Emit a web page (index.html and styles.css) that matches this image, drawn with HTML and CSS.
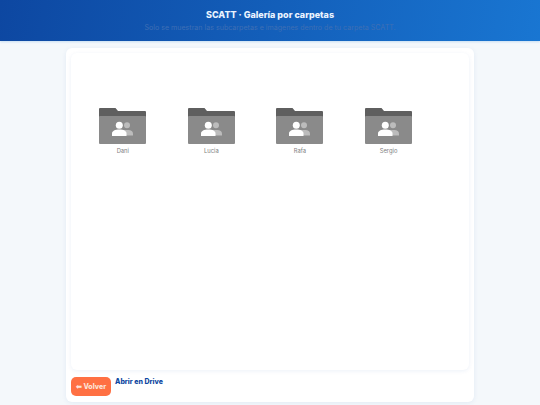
FILE: index.html
```html
<!DOCTYPE html>
<html lang="es">
<head>
<meta charset="utf-8">
<title>SCATT</title>
<link rel="stylesheet" href="styles.css">
</head>
<body>
<header class="top">
  <h1>SCATT · Galería por carpetas</h1>
  <p>Solo se muestran las subcarpetas e imágenes dentro de tu carpeta SCATT.</p>
</header>
<main class="card">
  <section class="panel">
    <div class="grid">
      <div class="tile">
        <svg class="folder" viewBox="0 0 47 36"><path class="tab" d="M0 1a1 1 0 0 1 1-1h15.500l2.500 3h27a1 1 0 0 1 1 1v8H0z"/><rect class="body" y="8" width="47" height="28" rx="1"/><use href="#people"/></svg>
        <span>Dani</span>
      </div>
      <div class="tile">
        <svg class="folder" viewBox="0 0 47 36"><path class="tab" d="M0 1a1 1 0 0 1 1-1h15.500l2.500 3h27a1 1 0 0 1 1 1v8H0z"/><rect class="body" y="8" width="47" height="28" rx="1"/><use href="#people"/></svg>
        <span>Lucia</span>
      </div>
      <div class="tile">
        <svg class="folder" viewBox="0 0 47 36"><path class="tab" d="M0 1a1 1 0 0 1 1-1h15.500l2.500 3h27a1 1 0 0 1 1 1v8H0z"/><rect class="body" y="8" width="47" height="28" rx="1"/><use href="#people"/></svg>
        <span>Rafa</span>
      </div>
      <div class="tile">
        <svg class="folder" viewBox="0 0 47 36"><path class="tab" d="M0 1a1 1 0 0 1 1-1h15.500l2.500 3h27a1 1 0 0 1 1 1v8H0z"/><rect class="body" y="8" width="47" height="28" rx="1"/><use href="#people"/></svg>
        <span>Sergio</span>
      </div>
    </div>
  </section>
  <footer class="actions">
    <a class="back">⬅ Volver</a>
    <a class="drive">Abrir en Drive</a>
  </footer>
</main>
<svg class="defs" width="0" height="0">
  <defs>
    <g id="people">
      <circle class="pb" cx="28" cy="17.300" r="3"/>
      <path class="pb" d="M24 22h5.500c2.500 0 4.500 1.300 4.500 3.500v2H24z"/>
      <circle class="pf" cx="20.300" cy="17.300" r="3.500"/>
      <path class="pf" d="M13 28v-2.500c0-2.500 3-4 7.300-4s7.200 1.500 7.200 4V28z"/>
    </g>
  </defs>
</svg>
</body>
</html>
```
FILE: styles.css
```css
* { box-sizing: border-box; }
html, body { height: 100%; }
body {
  margin: 0;
  background: #f4f8fb;
  font-family: "Inter", "Liberation Sans", sans-serif;
  display: flex;
  flex-direction: column;
  overflow: hidden;
}
.top {
  height: 41px;
  flex: none;
  background: linear-gradient(100deg, #0d47a1, #1976d2);
  text-align: center;
  padding-top: 8px;
  box-shadow: 0 1px 2px rgba(25, 118, 210, .2);
}
.top h1 {
  margin: 0;
  font-size: 9px;
  line-height: 13px;
  font-weight: 800;
  color: #eaf3ff;
}
.top p {
  margin: 2px 0 0;
  font-size: 7.100px;
  line-height: 10px;
  color: #3f6fb5;
}
.card {
  margin: 7px 66px 3px;
  flex: 1;
  min-height: 0;
  background: #fff;
  border-radius: 6px;
  box-shadow: 0 1px 5px rgba(13, 71, 161, .08);
  padding: 5px;
  display: flex;
  flex-direction: column;
}
.panel {
  height: 317px;
  flex: none;
  border-radius: 6px;
  box-shadow: 0 1px 4px rgba(13, 71, 161, .08);
  padding: 55px 0 0 7.500px;
}
.grid {
  display: grid;
  grid-template-columns: repeat(4, 88.600px);
}
.tile {
  display: flex;
  flex-direction: column;
  align-items: center;
  gap: 2px;
}
.folder { width: 47px; height: 36px; display: block; }
.tab { fill: #5f5f5f; }
.body { fill: #8a8a8a; }
.pf { fill: #fff; }
.pb { fill: #bcbcbc; }
.tile span {
  font-size: 5.800px;
  line-height: 9px;
  color: #808080;
}
.actions {
  display: flex;
  align-items: flex-start;
  gap: 4px;
  margin-top: 7px;
}
.back {
  width: 40px;
  height: 19px;
  background: #ff7043;
  border-radius: 5px;
  color: #fde3d8;
  font-size: 7px;
  font-weight: 800;
  line-height: 19px;
  text-align: center;
  white-space: nowrap;
}
.drive {
  font-size: 7px;
  font-weight: 800;
  line-height: 9px;
  color: #0d47a1;
}
.defs { position: absolute; }
```
